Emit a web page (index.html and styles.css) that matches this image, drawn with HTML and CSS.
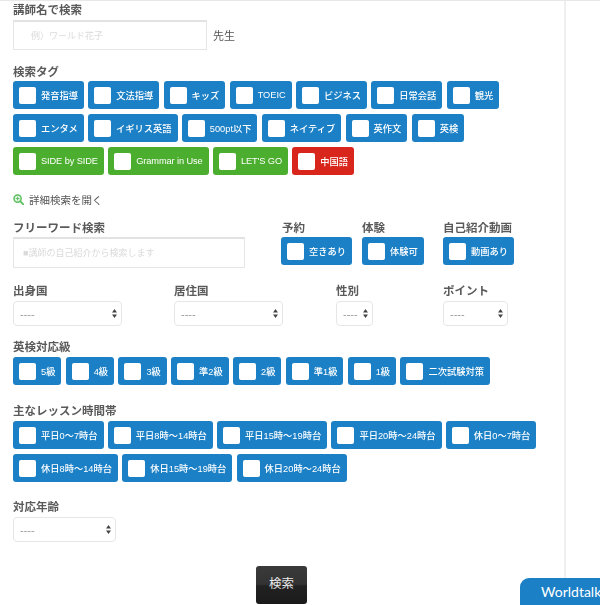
FILE: index.html
```html
<!DOCTYPE html>
<html lang="ja">
<head>
<meta charset="utf-8">
<title>講師検索</title>
<link rel="stylesheet" href="styles.css">
</head>
<body>
<form class="panel">
  <h3 class="label first">講師名で検索</h3>
  <div class="name-row">
    <input class="field name-field" type="text" placeholder="例）ワールド花子">
    <span class="suffix">先生</span>
  </div>

  <h3 class="label sec-tags">検索タグ</h3>
  <div class="tags">
    <label class="tag"><input type="checkbox"><span>発音指導</span></label>
    <label class="tag"><input type="checkbox"><span>文法指導</span></label>
    <label class="tag"><input type="checkbox"><span>キッズ</span></label>
    <label class="tag"><input type="checkbox"><span>TOEIC</span></label>
    <label class="tag"><input type="checkbox"><span>ビジネス</span></label>
    <label class="tag"><input type="checkbox"><span>日常会話</span></label>
    <label class="tag"><input type="checkbox"><span>観光</span></label>
    <label class="tag"><input type="checkbox"><span>エンタメ</span></label>
    <label class="tag"><input type="checkbox"><span>イギリス英語</span></label>
    <label class="tag"><input type="checkbox"><span>500pt以下</span></label>
    <label class="tag"><input type="checkbox"><span>ネイティブ</span></label>
    <label class="tag"><input type="checkbox"><span>英作文</span></label>
    <label class="tag"><input type="checkbox"><span>英検</span></label>
  </div>
  <div class="tags">
    <label class="tag green"><input type="checkbox"><span>SIDE by SIDE</span></label>
    <label class="tag green"><input type="checkbox"><span>Grammar in Use</span></label>
    <label class="tag green"><input type="checkbox"><span>LET'S GO</span></label>
    <label class="tag red"><input type="checkbox"><span>中国語</span></label>
  </div>

  <a class="more" href="#">
    <svg class="more-icon" width="11" height="11" viewBox="0 0 11 11" aria-hidden="true">
      <circle cx="4.6" cy="4.6" r="3.6" fill="#e6f5e6" stroke="#5cbf60" stroke-width="1.5"/>
      <path d="M7.3 7.3 10.3 10.3" stroke="#5cbf60" stroke-width="1.8" stroke-linecap="round"/>
      <path d="M2.8 4.6H6.4M4.6 2.8V6.4" stroke="#5cbf60" stroke-width="1"/>
    </svg>
    <span>詳細検索を開く</span>
  </a>

  <div class="free-row">
    <div class="col-free">
      <h3 class="label">フリーワード検索</h3>
      <input class="field free-field" type="text" placeholder="■講師の自己紹介から検索します">
    </div>
    <div class="col-yoyaku">
      <h3 class="label">予約</h3>
      <label class="tag"><input type="checkbox"><span>空きあり</span></label>
    </div>
    <div class="col-taiken">
      <h3 class="label">体験</h3>
      <label class="tag"><input type="checkbox"><span>体験可</span></label>
    </div>
    <div>
      <h3 class="label">自己紹介動画</h3>
      <label class="tag"><input type="checkbox"><span>動画あり</span></label>
    </div>
  </div>

  <div class="select-row">
    <div class="col-country">
      <h3 class="label">出身国</h3>
      <select class="select s-country"><option>----</option></select>
    </div>
    <div class="col-live">
      <h3 class="label">居住国</h3>
      <select class="select s-country"><option>----</option></select>
    </div>
    <div class="col-gender">
      <h3 class="label">性別</h3>
      <select class="select s-gender"><option>----</option></select>
    </div>
    <div>
      <h3 class="label">ポイント</h3>
      <select class="select s-point"><option>----</option></select>
    </div>
  </div>

  <h3 class="label sec-eiken">英検対応級</h3>
  <div class="tags">
    <label class="tag"><input type="checkbox"><span>5級</span></label>
    <label class="tag"><input type="checkbox"><span>4級</span></label>
    <label class="tag"><input type="checkbox"><span>3級</span></label>
    <label class="tag"><input type="checkbox"><span>準2級</span></label>
    <label class="tag"><input type="checkbox"><span>2級</span></label>
    <label class="tag"><input type="checkbox"><span>準1級</span></label>
    <label class="tag"><input type="checkbox"><span>1級</span></label>
    <label class="tag"><input type="checkbox"><span>二次試験対策</span></label>
  </div>

  <h3 class="label sec-time">主なレッスン時間帯</h3>
  <div class="tags">
    <label class="tag"><input type="checkbox"><span>平日0〜7時台</span></label>
    <label class="tag"><input type="checkbox"><span>平日8時〜14時台</span></label>
    <label class="tag"><input type="checkbox"><span>平日15時〜19時台</span></label>
    <label class="tag"><input type="checkbox"><span>平日20時〜24時台</span></label>
    <label class="tag"><input type="checkbox"><span>休日0〜7時台</span></label>
    <label class="tag"><input type="checkbox"><span>休日8時〜14時台</span></label>
    <label class="tag"><input type="checkbox"><span>休日15時〜19時台</span></label>
    <label class="tag"><input type="checkbox"><span>休日20時〜24時台</span></label>
  </div>

  <h3 class="label sec-age">対応年齢</h3>
  <select class="select s-age"><option>----</option></select>

  <div class="submit-row">
    <button class="submit" type="button">検索</button>
  </div>
</form>
<div class="chat-tab">Worldtalk オンライン</div>
</body>
</html>
```

FILE: styles.css
```css
* { box-sizing: border-box; }

html, body { height: 100%; overflow: hidden; }

body {
  margin: 0;
  background: #fff;
  color: #555;
  border-top: 1px solid #e8e8e8;
  font-family: "Liberation Sans", "Noto Sans CJK JP", sans-serif;
  filter: blur(0.5px);
}

.panel {
  width: 566px;
  height: 100%;
  padding: 2px 0 0 13px;
  border-right: 2px solid #f0f0f0;
}

.label {
  margin: 0 0 3px;
  font-size: 11.5px;
  line-height: 14px;
  font-weight: 700;
  color: #5a5a5a;
  white-space: nowrap;
}

.sec-tags { margin: 15px 0 2px; }
.sec-eiken { margin: 14px 0 3px; }
.sec-time { margin: 19px 0 3px; }
.sec-age { margin: 18px 0 3px; }

.name-row { display: flex; align-items: center; gap: 6px; }

.suffix { font-size: 11px; color: #555; }

.field {
  display: block;
  margin: 0;
  padding: 0 0 0 9px;
  background: #fff;
  border: 1px solid #e6e6e6;
  border-top: 2px solid #e2e2e2;
  font-family: inherit;
  font-size: 9px;
}

.field::placeholder { color: #dadada; opacity: 1; }

.name-field { width: 194px; height: 30px; padding-left: 17px; }
.free-field { width: 232px; height: 31px; }

.tags {
  display: flex;
  flex-wrap: wrap;
  gap: 5px 4.3px;
  width: 550px;
}

.tags + .tags { margin-top: 5px; }

.tag {
  display: inline-flex;
  align-items: center;
  gap: 5px;
  height: 28px;
  padding: 0 6px;
  background: #1c80c6;
  border-radius: 3px;
  color: #fff;
  font-size: 9.25px;
  font-weight: 500;
  white-space: nowrap;
}

.tag input {
  appearance: none;
  flex: none;
  width: 17px;
  height: 17px;
  margin: 0;
  background: #fff;
  border-radius: 2px;
}

.green { background: #4cae2e; letter-spacing: -0.1px; }
.red { background: #d9261c; }

.more {
  display: flex;
  align-items: center;
  gap: 5px;
  height: 14px;
  margin-top: 17px;
  font-size: 10.5px;
  color: #555;
  text-decoration: none;
}

.more-icon { flex: none; }

.free-row { display: flex; margin-top: 15px; }
.col-free { width: 268px; }
.col-yoyaku { width: 81px; }
.col-taiken { width: 81px; }

.free-row .label { margin-bottom: 2px; }
.col-yoyaku .label { padding-left: 1px; }

.select-row { display: flex; margin-top: 16px; }
.col-country { width: 161px; }
.col-live { width: 162px; }
.col-gender { width: 107px; }

.select {
  display: block;
  height: 25px;
  margin: 0;
  padding: 0 0 0 6px;
  appearance: none;
  border: 1px solid #e6e6e6;
  border-radius: 4px;
  background: #fff url("data:image/svg+xml,%3Csvg xmlns='http://www.w3.org/2000/svg' width='5' height='9'%3E%3Cpath d='M2.5 0 5 3.4H0ZM2.5 9 0 5.6H5Z' fill='%23444'/%3E%3C/svg%3E") no-repeat right 4px center;
  color: #999;
  font-family: inherit;
  font-size: 11px;
}

.s-country { width: 109px; }
.s-gender { width: 37px; }
.s-point { width: 65px; }
.s-age { width: 103px; }

.submit-row { display: flex; margin-top: 24px; padding-left: 243px; }

.submit {
  width: 51px;
  height: 38px;
  padding: 0 0 5px;
  border: 0;
  border-radius: 3px;
  background: linear-gradient(#3a3a3a 0%, #333 48%, #222 52%, #1a1a1a 100%);
  color: #e8e8e8;
  font-family: inherit;
  font-size: 12.5px;
}

.chat-tab {
  position: fixed;
  left: 520px;
  top: 577px;
  width: 80px;
  height: 28px;
  padding: 5px 0 0 21px;
  overflow: hidden;
  background: #1c80c6;
  border-radius: 9px 0 0 0;
  color: #fff;
  font-family: "Lato", sans-serif;
  font-size: 14px;
  line-height: 18px;
  white-space: nowrap;
}
```
